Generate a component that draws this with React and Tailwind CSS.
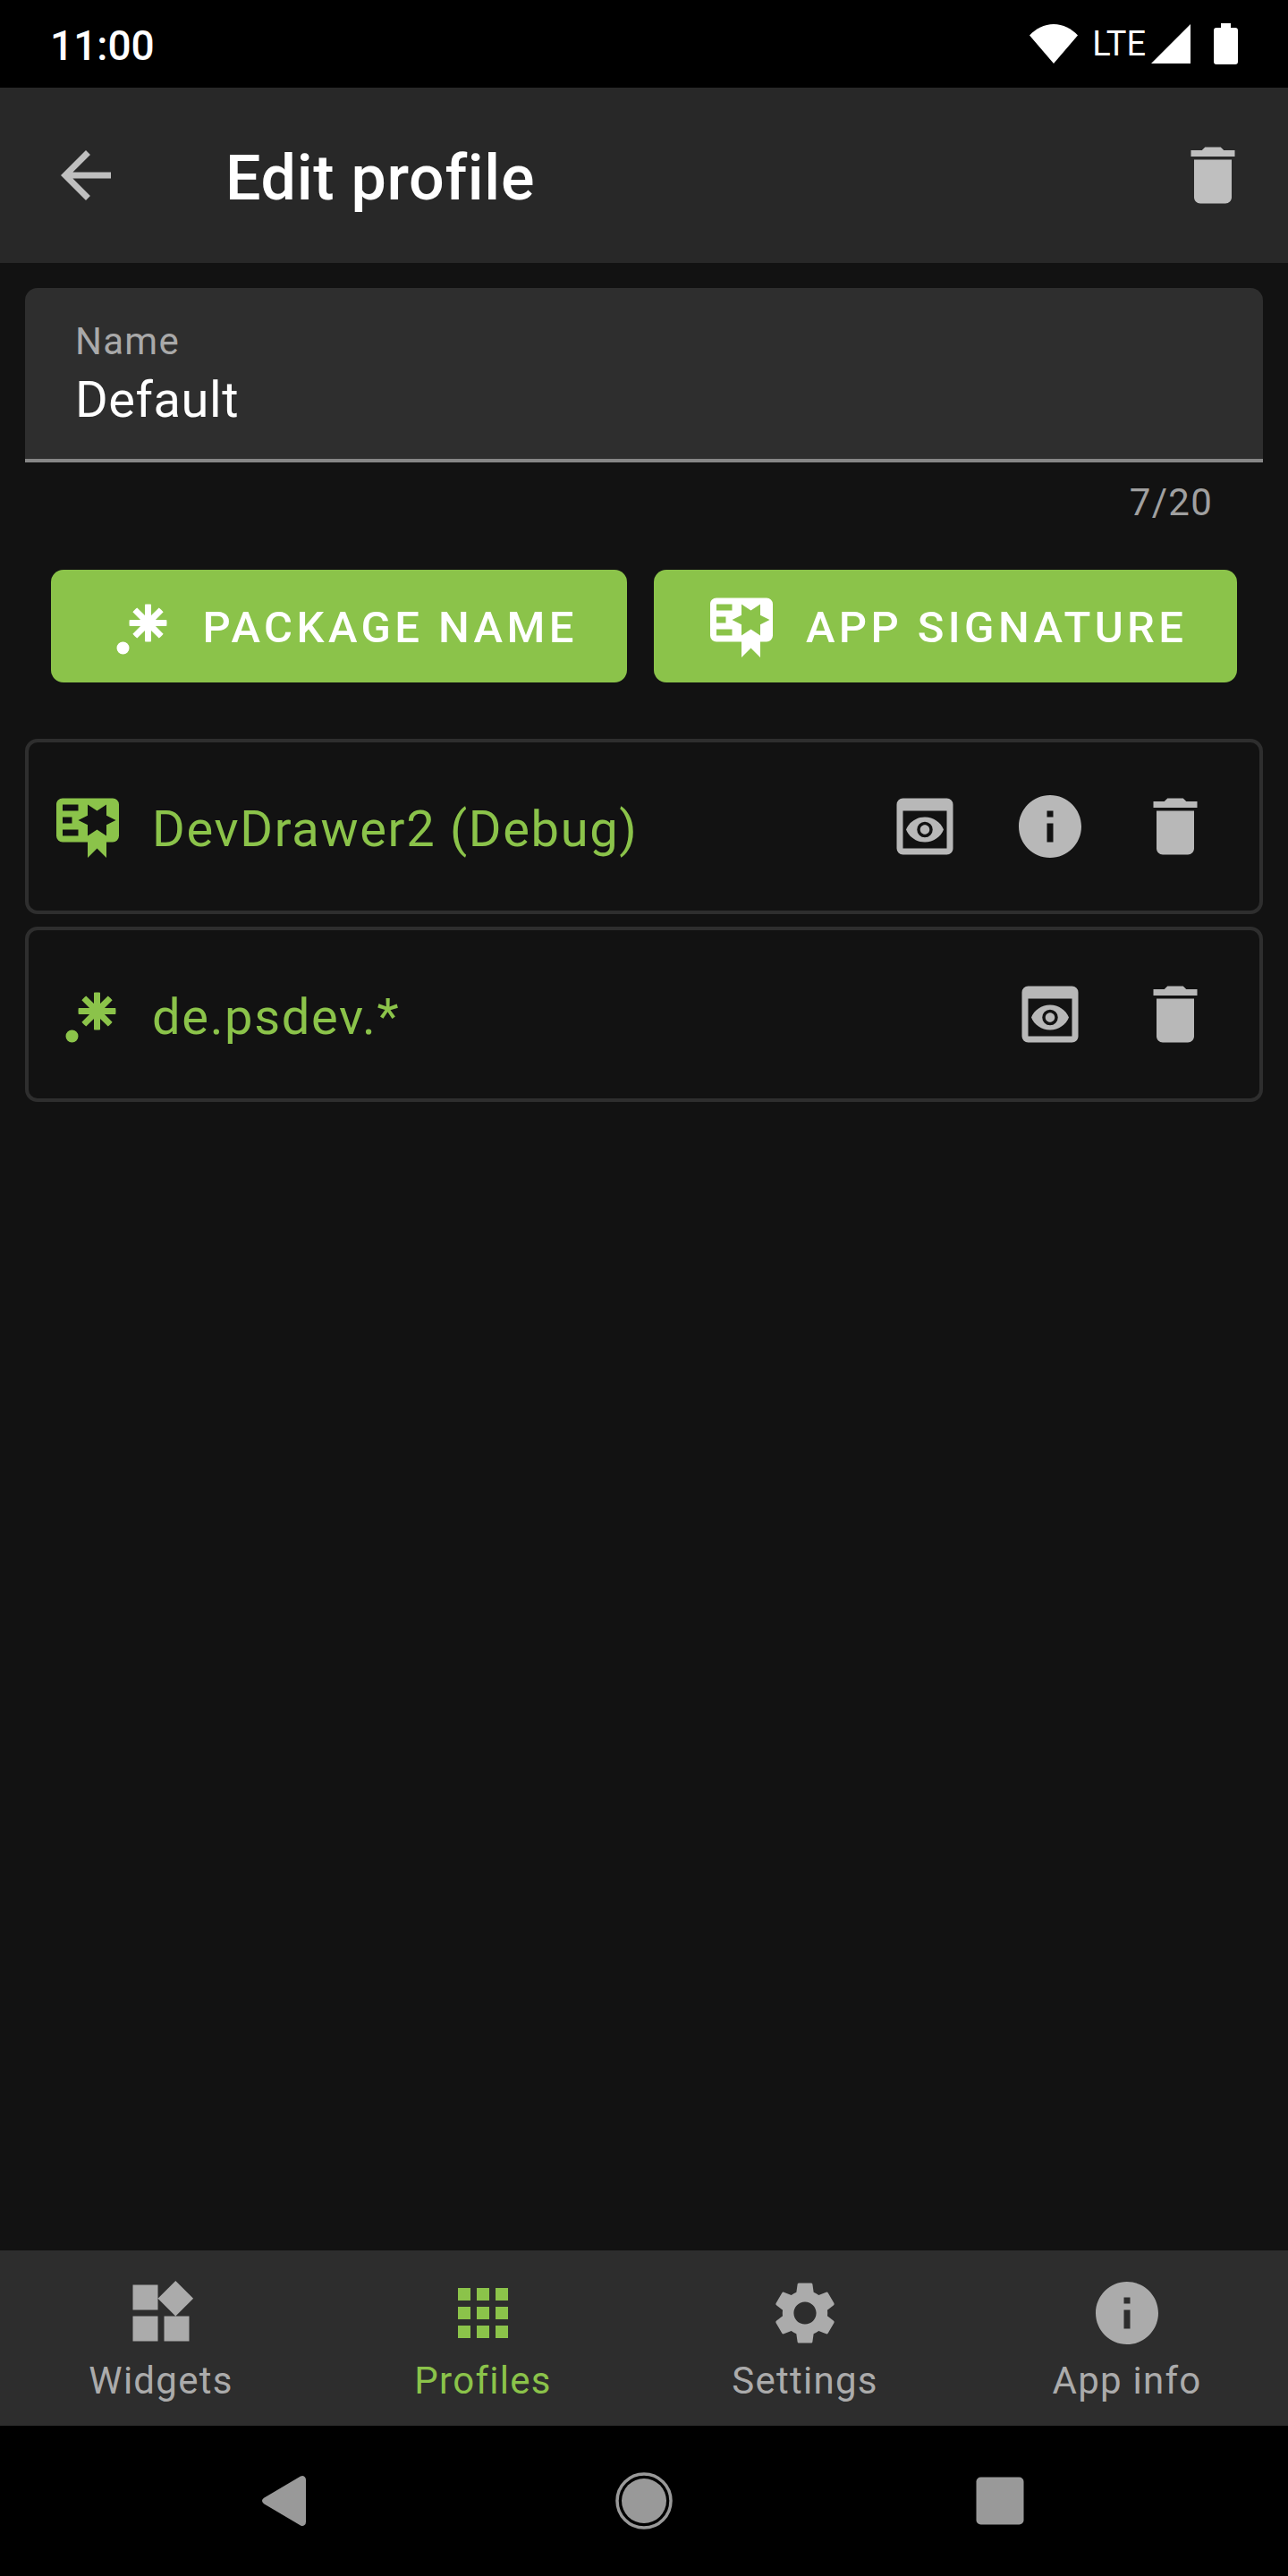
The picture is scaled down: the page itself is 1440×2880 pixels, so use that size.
import { useState } from 'react';
import {
  MdApps,
  MdArrowBack,
  MdDelete,
  MdInfo,
  MdPreview,
  MdSettings,
  MdWidgets,
} from 'react-icons/md';

const MAX_NAME_LENGTH = 20;

function CertificateIcon({ className }) {
  return (
    <svg viewBox="0 0 24 24" fill="currentColor" className={className} aria-hidden="true">
      <path d="M4,3C2.89,3 2,3.89 2,5V15A2,2 0 0,0 4,17H12V22L15,19L18,22V17H20A2,2 0 0,0 22,15V5A2,2 0 0,0 20,3H4M12,5L15,7L18,5V8.5L21,10L18,11.5V15L15,13L12,15V11.5L9,10L12,8.5V5M4,5H9V7H4V5M4,9H7V11H4V9M4,13H9V15H4V13Z" />
    </svg>
  );
}

function PatternIcon({ className }) {
  return (
    <svg viewBox="0 0 24 24" fill="currentColor" className={className} aria-hidden="true">
      <path d="M16,16.92C15.67,16.97 15.34,17 15,17C14.66,17 14.33,16.97 14,16.92V13.41L11.5,15.89C11,15.5 10.5,15 10.11,14.5L12.59,12H9.08C9.03,11.67 9,11.34 9,11C9,10.66 9.03,10.33 9.08,10H12.59L10.11,7.5C10.3,7.25 10.5,7 10.76,6.76C11,6.5 11.25,6.3 11.5,6.11L14,8.59V5.08C14.33,5.03 14.66,5 15,5C15.34,5 15.67,5.03 16,5.08V8.59L18.5,6.11C19,6.5 19.5,7 19.89,7.5L17.41,10H20.92C20.97,10.33 21,10.66 21,11C21,11.34 20.97,11.67 20.92,12H17.41L19.89,14.5C19.7,14.75 19.5,15 19.24,15.24C19,15.5 18.75,15.7 18.5,15.89L16,13.41V16.92M5,19A2,2 0 0,1 7,17A2,2 0 0,1 9,19A2,2 0 0,1 7,21A2,2 0 0,1 5,19Z" />
    </svg>
  );
}

function StatusBar() {
  return (
    <div className="flex h-[98px] shrink-0 items-center justify-between bg-black px-14 text-white">
      <span className="pt-1 text-[46px] leading-[56px] font-medium">11:00</span>
      <div className="flex items-center">
        <svg viewBox="0 0 54 44" className="h-11 w-[54px]" fill="currentColor" aria-hidden="true">
          <path d="M27 44 0 12.500C7 5 16.500 0 27 0s20 5 27 12.500Z" />
        </svg>
        <span className="ml-4 text-[38px] leading-[44px]">LTE</span>
        <svg viewBox="0 0 44 44" className="ml-1.5 size-11" fill="currentColor" aria-hidden="true">
          <path d="M0 44H44V0Z" />
        </svg>
        <svg viewBox="0 0 27 46" className="ml-[26px] h-[46px] w-[27px]" fill="currentColor" aria-hidden="true">
          <path d="M8 0h11v5h5a3 3 0 0 1 3 3v35a3 3 0 0 1-3 3H3a3 3 0 0 1-3-3V8a3 3 0 0 1 3-3h5Z" />
        </svg>
      </div>
    </div>
  );
}

function AppBar() {
  return (
    <header className="flex h-[196px] shrink-0 items-center bg-[#282828] pr-[42px] pl-[54px]">
      <button type="button" aria-label="Back" className="text-[#bfbfbf]">
        <MdArrowBack className="size-21" />
      </button>
      <h1 className="ml-[114px] flex-1 pt-1.5 text-[70px] leading-[80px] font-medium tracking-[0.01em] text-white">
        Edit profile
      </h1>
      <button type="button" aria-label="Delete profile" className="text-[#bfbfbf]">
        <MdDelete className="size-21" />
      </button>
    </header>
  );
}

function NameField() {
  const [name, setName] = useState('Default');
  return (
    <div>
      <div className="rounded-t-[14px] border-b-4 border-[#868686] bg-[#2e2e2e] px-14 pt-9 pb-[34px]">
        <label htmlFor="profile-name" className="block text-[42px] leading-[48px] tracking-[0.03em] text-[#a9a9a9]">
          Name
        </label>
        <input
          id="profile-name"
          type="text"
          value={name}
          maxLength={MAX_NAME_LENGTH}
          onChange={(event) => setName(event.target.value)}
          className="mt-[9px] block h-16 w-full bg-transparent text-[56px] leading-[64px] tracking-[0.01em] text-white outline-none"
        />
      </div>
      <p className="mt-[21px] px-14 text-right text-[42px] leading-[48px] tracking-[0.03em] text-[#a0a0a0]">
        {name.length}/{MAX_NAME_LENGTH}
      </p>
    </div>
  );
}

function AddButton({ icon: Icon, children }) {
  return (
    <button
      type="button"
      className="flex h-[126px] flex-auto items-center justify-center gap-[30px] rounded-[14px] bg-[#8bc34a] px-[54px] text-[49px] leading-[56px] font-medium tracking-[0.09em] whitespace-nowrap text-white uppercase"
    >
      <Icon className="size-21 shrink-0" />
      <span className="pt-1">{children}</span>
    </button>
  );
}

const filters = [
  {
    name: 'DevDrawer2 (Debug)',
    icon: CertificateIcon,
    actions: [
      { label: 'Preview', icon: MdPreview },
      { label: 'Info', icon: MdInfo },
      { label: 'Delete', icon: MdDelete },
    ],
  },
  {
    name: 'de.psdev.*',
    icon: PatternIcon,
    actions: [
      { label: 'Preview', icon: MdPreview },
      { label: 'Delete', icon: MdDelete },
    ],
  },
];

function FilterCard({ name, icon: Icon, actions }) {
  return (
    <li className="flex h-[196px] items-center rounded-[14px] border-4 border-[#2e2e2e] px-6 text-[#8bc34a]">
      <Icon className="size-21 shrink-0" />
      <span className="ml-[30px] flex-1 pt-1.5 text-[56px] leading-[64px] tracking-[0.03em]">{name}</span>
      {actions.map(({ label, icon: ActionIcon }) => (
        <button key={label} type="button" aria-label={`${label} ${name}`} className="px-7 text-[#b8b8b8]">
          <ActionIcon className="size-21" />
        </button>
      ))}
    </li>
  );
}

const tabs = [
  { label: 'Widgets', icon: MdWidgets },
  { label: 'Profiles', icon: MdApps, active: true },
  { label: 'Settings', icon: MdSettings },
  { label: 'App info', icon: MdInfo },
];

function BottomNavigation() {
  return (
    <nav className="grid h-[196px] shrink-0 grid-cols-4 bg-[#2d2d2d]">
      {tabs.map(({ label, icon: Icon, active }) => (
        <a
          key={label}
          href="#"
          aria-current={active ? 'page' : undefined}
          className={`flex flex-col items-center gap-2.5 pt-7 text-[42px] leading-[48px] tracking-[0.03em] ${
            active ? 'text-[#8bc34a]' : 'text-[#ababab]'
          }`}
        >
          <Icon className="size-21" />
          {label}
        </a>
      ))}
    </nav>
  );
}

function SystemNavigation() {
  return (
    <div className="flex h-[168px] shrink-0 items-center justify-between bg-black px-70 text-[#999999]">
      <button type="button" aria-label="System back">
        <svg viewBox="0 0 84 84" className="size-21" fill="currentColor" aria-hidden="true">
          <path d="M15 38.800 56 14.600Q58.500 13.300 60.500 15 62 16.200 62 18.500V65.500Q62 67.800 60.500 69 58.500 70.700 56 69.400L15 45.200Q11 42 15 38.800Z" />
        </svg>
      </button>
      <button type="button" aria-label="Home">
        <svg viewBox="0 0 84 84" className="size-21" aria-hidden="true">
          <circle cx="42" cy="42" r="30" fill="none" stroke="currentColor" strokeWidth="3.500" />
          <circle cx="42" cy="42" r="25" fill="currentColor" />
        </svg>
      </button>
      <button type="button" aria-label="Recent apps">
        <svg viewBox="0 0 84 84" className="size-21" fill="currentColor" aria-hidden="true">
          <rect x="15.500" y="15.500" width="53" height="53" rx="5" />
        </svg>
      </button>
    </div>
  );
}

export default function App() {
  return (
    <div className="flex min-h-screen flex-col bg-[#121212] font-[Roboto,sans-serif]">
      <StatusBar />
      <AppBar />
      <main className="flex-1 p-7">
        <NameField />
        <div className="mt-[51px] flex gap-[30px] px-[29px]">
          <AddButton icon={PatternIcon}>Package name</AddButton>
          <AddButton icon={CertificateIcon}>App signature</AddButton>
        </div>
        <ul className="mt-[63px] flex flex-col gap-3.5">
          {filters.map((filter) => (
            <FilterCard key={filter.name} {...filter} />
          ))}
        </ul>
      </main>
      <BottomNavigation />
      <SystemNavigation />
    </div>
  );
}
